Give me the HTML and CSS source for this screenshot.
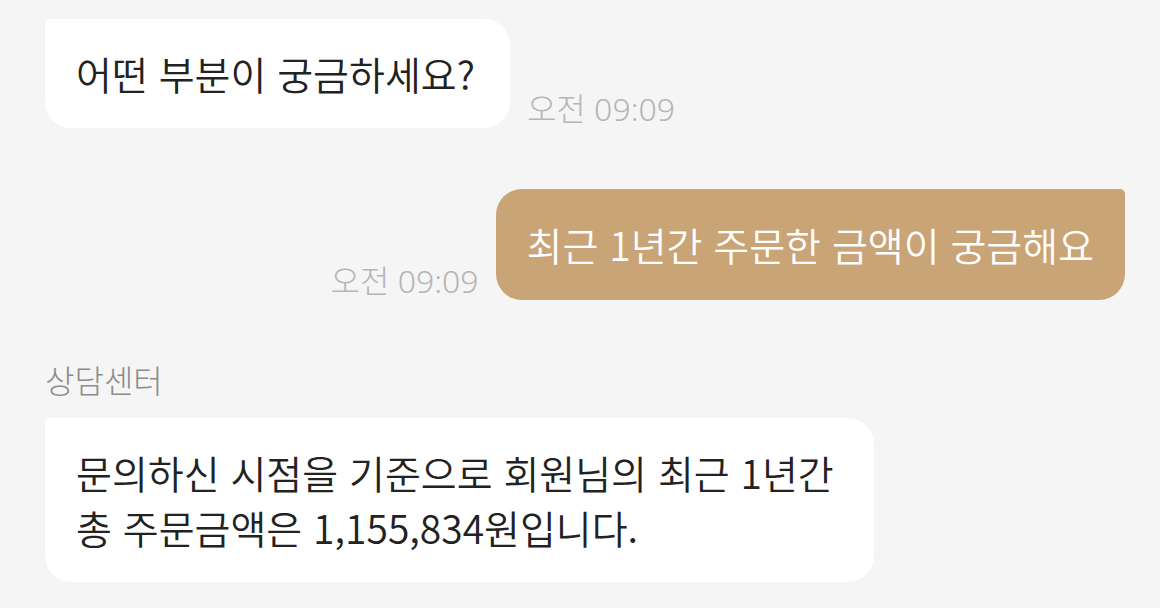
FILE: index.html
```html
<!DOCTYPE html>
<html lang="ko">
<head>
  <meta charset="UTF-8" />
  <meta name="viewport" content="width=device-width, initial-scale=1.0" />
  <title>상담센터</title>
  <link rel="stylesheet" href="styles.css">
</head>
<body>

  <div class="chat">
    <div class="row row-in">
      <div class="bubble bubble-in">어떤 부분이 궁금하세요?</div>
      <span class="time">오전 09:09</span>
    </div>

    <div class="row row-out">
      <span class="time">오전 09:09</span>
      <div class="bubble bubble-out">최근 1년간 주문한 금액이 궁금해요</div>
    </div>

    <div class="sender">상담센터</div>
    <div class="row row-in">
      <div class="bubble bubble-in bubble-wide">문의하신 시점을 기준으로 회원님의 최근 1년간<br>총 주문금액은 1,155,834원입니다.</div>
    </div>
  </div>

</body>
</html>
```

FILE: styles.css
```css
body {
  margin: 0;
  background-color: #f5f5f5;
  font-family: "Noto Sans CJK KR", "Noto Sans", sans-serif;
}
.chat {
  padding: 19px 35px 0 45px;
}
.row {
  display: flex;
  align-items: flex-end;
  gap: 17px;
}
.row-out {
  justify-content: flex-end;
  margin-top: 61px;
}
.bubble {
  font-size: 39px;
  font-weight: 350;
  line-height: 55px;
  padding: 27px 35px 27px 31px;
  border-radius: 26px;
}
.bubble-in {
  background-color: #fff;
  color: #222;
  border-top-left-radius: 5px;
}
.bubble-wide {
  padding-right: 40px;
}
.bubble-out {
  background-color: #c9a477;
  color: #fff;
  padding: 28px 31px;
  border-top-right-radius: 5px;
}
.time {
  font-family: "Noto Sans", "Noto Sans CJK KR", sans-serif;
  font-size: 32px;
  font-weight: 300;
  line-height: 39px;
  color: #b5b5b5;
  white-space: nowrap;
}
.sender {
  margin: 58px 0 17px;
  font-size: 32px;
  font-weight: 300;
  line-height: 43px;
  color: #8c8c8c;
}
```
